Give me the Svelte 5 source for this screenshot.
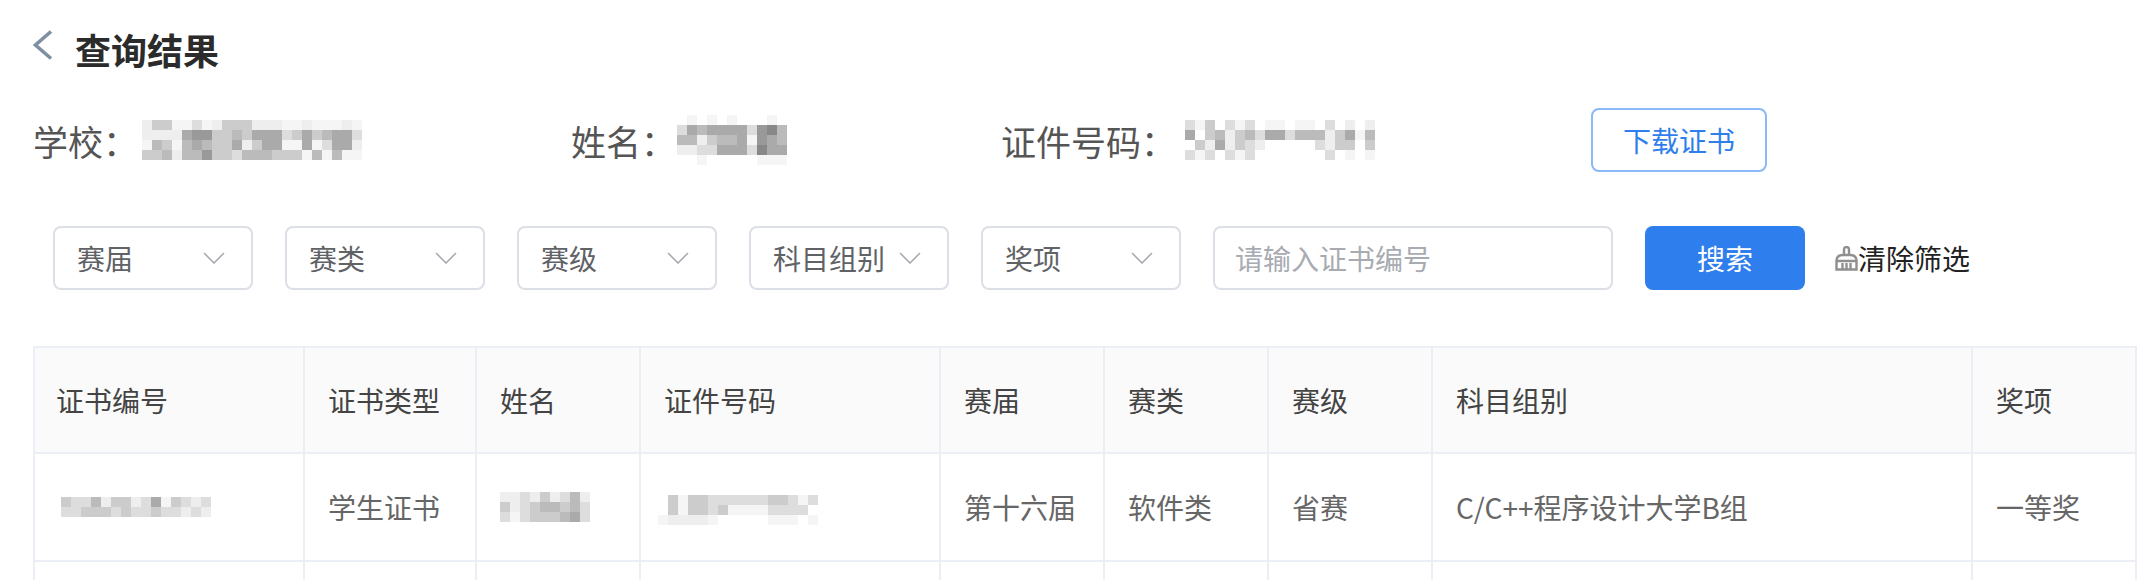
<script>
  const info = [
    {
      label: '学校：',
      gap: 4,
      mosaic: [
        'eccffdfeccceeeffefffef',
        'eeeea99ccbcaaadcacbaad',
        'fbcfbabccaecaaffafdaae',
        'ccbebb9ccdbbbcccfbfbff'
      ]
    },
    {
      label: '姓名：',
      gap: 1,
      mosaic: [
        '.f.f.f...f.',
        'dabaaaad98b',
        'bbecbbaf9ab',
        'eeddaaad8aa',
        '..f.....fff'
      ]
    },
    {
      label: '证件号码：',
      gap: 9,
      mosaic: [
        'dfc.dfd.ff.ff.d.e.e',
        'a.cbecbdaadbbbecafb',
        '.ceaecde.....decc.c',
        'dfd.dfd.......d.f.f'
      ]
    }
  ];

  const filters = ['赛届', '赛类', '赛级', '科目组别', '奖项'];

  const columns = [
    { title: '证书编号', width: 270 },
    { title: '证书类型', width: 172 },
    { title: '姓名', width: 164 },
    { title: '证件号码', width: 300 },
    { title: '赛届', width: 164 },
    { title: '赛类', width: 164 },
    { title: '赛级', width: 164 },
    { title: '科目组别', width: 540 },
    { title: '奖项', width: 164 }
  ];

  const certMosaic = ['cddbeccedafcded', 'ddcccdcddcddede'];
  const nameMosaic = ['eedecedbe', 'cedcbbcbd', 'dfdcccbad'];
  const idMosaic = ['.cfccddddddccdfd', '.cfccdcffffdddd.', 'feeeef.....fff.f'];

  function shade(ch) {
    if (ch === 'f') return '#f5f5f5';
    return '#' + ch + ch + ch + ch + ch + ch;
  }
</script>

{#snippet mosaic(rows)}
  <svg class="mosaic" width={rows[0].length * 10} height={rows.length * 10} aria-hidden="true">
    {#each rows as row, y}
      {#each row.split('') as ch, x}
        {#if ch !== '.'}
          <rect x={x * 10} y={y * 10} width="10" height="10" fill={shade(ch)} />
        {/if}
      {/each}
    {/each}
  </svg>
{/snippet}

<div class="page">
  <header class="title-row">
    <svg class="back" width="20" height="30" viewBox="0 0 20 30">
      <path d="M18 1.5 L2.5 15 L18 28.5" />
    </svg>
    <h1>查询结果</h1>
  </header>

  <section class="info-row">
    {#each info as item}
      <div class="info-item">
        <span class="info-label" style="margin-right: {item.gap}px">{item.label}</span>
        {@render mosaic(item.mosaic)}
      </div>
    {/each}
    <button class="download">下载证书</button>
  </section>

  <section class="filter-row">
    {#each filters as name}
      <div class="select">
        <span>{name}</span>
        <svg width="22" height="12" viewBox="0 0 22 12">
          <path d="M1 1 L11 11 L21 1" />
        </svg>
      </div>
    {/each}
    <input class="search-input" placeholder="请输入证书编号" />
    <button class="search">搜索</button>
    <button class="clear">
      <svg width="23" height="25" viewBox="0 0 23 25">
        <path d="M9 9 V3.5 a2.5 2.5 0 0 1 5 0 V9" />
        <path d="M1.5 14 Q2 9 8 9 H15 Q21 9 21.5 14 V23.5 H1.5 Z" />
        <path d="M1.5 15 H21.5 M7.5 17 V23 M11.5 17 V23 M15.5 17 V23" />
      </svg>
      清除筛选
    </button>
  </section>

  <table>
    <colgroup>
      {#each columns as col}
        <col style="width: {col.width}px" />
      {/each}
    </colgroup>
    <thead>
      <tr>
        {#each columns as col}
          <th>{col.title}</th>
        {/each}
      </tr>
    </thead>
    <tbody>
      <tr>
        <td><div class="cert-cell">{@render mosaic(certMosaic)}</div></td>
        <td>学生证书</td>
        <td>{@render mosaic(nameMosaic)}</td>
        <td><div class="id-cell">{@render mosaic(idMosaic)}</div></td>
        <td>第十六届</td>
        <td>软件类</td>
        <td>省赛</td>
        <td>C/C++程序设计大学B组</td>
        <td>一等奖</td>
      </tr>
      <tr>
        {#each columns as col}
          <td></td>
        {/each}
      </tr>
    </tbody>
  </table>
</div>

<style>
  :global(body) {
    margin: 0;
    background: #fff;
  }

  .page {
    height: 550px;
    overflow: hidden;
    padding: 30px 0 0 33px;
    font-family: 'Noto Sans CJK SC', sans-serif;
  }

  .title-row {
    display: flex;
    align-items: center;
    height: 40px;
    margin-bottom: 38px;
  }

  .back {
    align-self: flex-start;
    margin-right: 22px;
  }

  .back path {
    fill: none;
    stroke: #7f90a4;
    stroke-width: 3.6;
  }

  h1 {
    margin: 0 0 2px;
    font-size: 36px;
    font-weight: 700;
    color: #2b2b2b;
  }

  .info-row {
    display: grid;
    grid-template-columns: 538px 430px 590px auto;
    align-items: center;
    height: 64px;
    margin-bottom: 54px;
  }

  .info-item {
    display: flex;
    align-items: center;
  }

  .info-label {
    font-size: 35px;
    color: #555;
  }

  .mosaic {
    display: block;
    filter: blur(0.3px);
  }

  button {
    font-family: inherit;
    cursor: pointer;
  }

  .download {
    width: 176px;
    height: 64px;
    padding: 0;
    background: #fff;
    border: 2px solid #8ab9f6;
    border-radius: 8px;
    color: #2f7eed;
    font-size: 28px;
  }

  .filter-row {
    display: flex;
    align-items: center;
    gap: 32px;
    height: 64px;
    margin-bottom: 56px;
    padding-left: 20px;
  }

  .select {
    display: flex;
    align-items: center;
    justify-content: space-between;
    box-sizing: border-box;
    width: 200px;
    height: 64px;
    padding: 0 26px 0 22px;
    border: 2px solid #dcdfe6;
    border-radius: 8px;
    color: #606266;
    font-size: 28px;
  }

  .select svg path {
    fill: none;
    stroke: #a8abb2;
    stroke-width: 1.6;
  }

  .search-input {
    box-sizing: border-box;
    width: 400px;
    height: 64px;
    padding: 0 20px;
    border: 2px solid #dcdfe6;
    border-radius: 8px;
    outline: none;
    font-family: inherit;
    font-size: 28px;
    color: #606266;
  }

  .search-input::placeholder {
    color: #a8abb2;
  }

  .search {
    width: 160px;
    height: 64px;
    padding: 0;
    border: none;
    border-radius: 8px;
    background: #2f7eed;
    color: #fff;
    font-size: 28px;
  }

  .clear {
    display: flex;
    align-items: center;
    margin-left: -2px;
    padding: 0;
    border: none;
    background: none;
    color: #222;
    font-size: 28px;
  }

  .clear svg {
    filter: blur(0.4px);
  }

  .clear svg path {
    fill: none;
    stroke: #8f8f8f;
    stroke-width: 2.4;
  }

  table {
    width: 2104px;
    table-layout: fixed;
    border-collapse: separate;
    border-spacing: 0;
    border-top: 2px solid #ebeef5;
    border-left: 2px solid #ebeef5;
  }

  th,
  td {
    box-sizing: border-box;
    height: 106px;
    padding: 0 0 0 23px;
    border-right: 2px solid #ebeef5;
    border-bottom: 2px solid #ebeef5;
    text-align: left;
    font-size: 28px;
    font-weight: 400;
  }

  th:first-child,
  td:first-child {
    padding-left: 21px;
  }

  th {
    background: #fafafa;
    color: #444;
  }

  td {
    height: 108px;
    color: #666;
  }

  .cert-cell {
    margin-left: 5px;
  }

  .id-cell {
    margin: 6px 0 0 -6px;
  }
</style>
